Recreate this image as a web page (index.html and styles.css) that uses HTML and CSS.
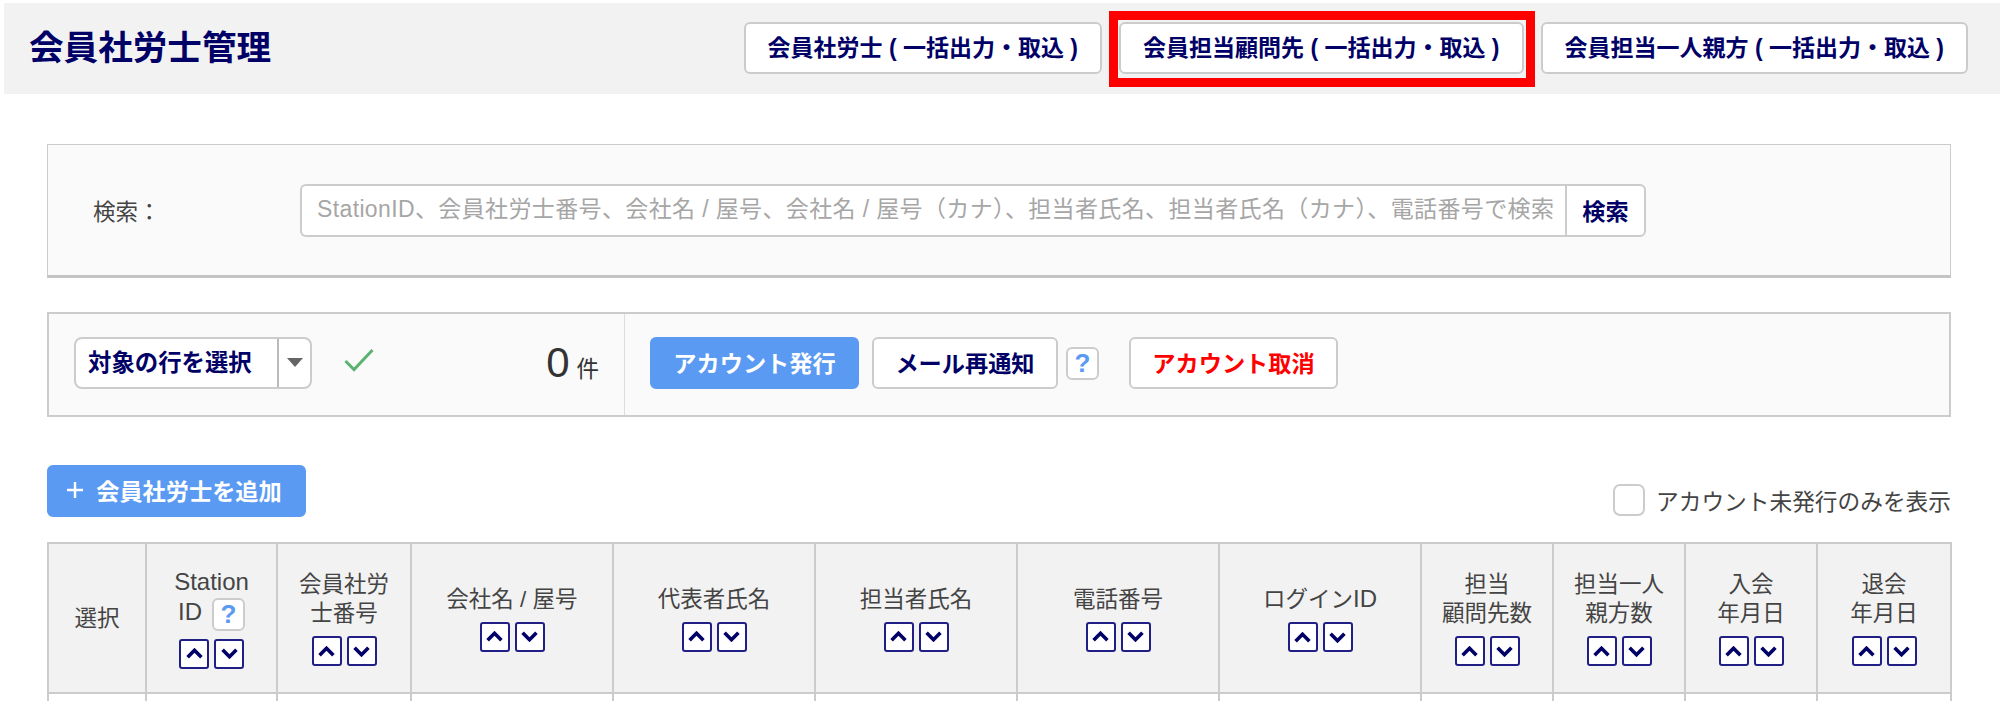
FILE: index.html
```html
<!DOCTYPE html>
<html lang="ja">
<head>
<meta charset="utf-8">
<title>会員社労士管理</title>
<link rel="stylesheet" href="styles.css">
</head>
<body>
<header class="topbar">
  <h1 class="title">会員社労士管理</h1>
  <nav class="top-actions">
    <a class="btn btn-top">会員社労士 ( 一括出力・取込 )</a>
    <a class="btn btn-top btn-marked">会員担当顧問先 ( 一括出力・取込 )</a>
    <a class="btn btn-top">会員担当一人親方 ( 一括出力・取込 )</a>
  </nav>
</header>
<main class="content">
  <section class="panel search-panel">
    <label class="search-label">検索：</label>
    <div class="search-group">
      <input class="search-input" type="text" placeholder="StationID、会員社労士番号、会社名 / 屋号、会社名 / 屋号（カナ）、担当者氏名、担当者氏名（カナ）、電話番号で検索">
      <button class="search-btn">検索</button>
    </div>
  </section>
  <section class="panel action-panel">
    <div class="select-area">
      <div class="row-select">
        <span class="row-select-label">対象の行を選択</span>
        <span class="row-select-caret"><span class="caret"></span></span>
      </div>
      <svg class="check" width="30" height="24" viewBox="0 0 30 24"><path d="M1.5 13 L10 21.5 L28.5 2" fill="none" stroke="#5cb270" stroke-width="3"/></svg>
      <div class="count"><span class="count-num">0</span><span class="count-unit">件</span></div>
    </div>
    <div class="action-buttons">
      <button class="btn btn-primary btn-issue">アカウント発行</button>
      <button class="btn btn-mail">メール再通知</button>
      <span class="help help-mail">?</span>
      <button class="btn btn-danger">アカウント取消</button>
    </div>
  </section>
  <section class="list-tools">
    <button class="btn btn-primary btn-add"><svg class="plus" width="18" height="18" viewBox="0 0 18 18"><path d="M9 1V17M1 9H17" stroke="#fff" stroke-width="2.4"/></svg>会員社労士を追加</button>
    <label class="only-unissued"><span class="checkbox"></span>アカウント未発行のみを表示</label>
  </section>
  <table class="grid">
    <colgroup>
      <col class="c-select"><col class="c-station"><col class="c-no"><col class="c-wide"><col class="c-wide"><col class="c-wide"><col class="c-wide"><col class="c-wide"><col class="c-num"><col class="c-num"><col class="c-num"><col class="c-last">
    </colgroup>
    <thead>
      <tr>
        <th>選択</th>
        <th><span class="latin">Station</span><br><span class="latin">ID</span><span class="help help-th">?</span><div class="sort"><span class="sort-btn"><svg viewBox="0 0 16 10" width="17" height="11"><path d="M1.5 8.5 L8 2 L14.5 8.5"/></svg></span><span class="sort-btn"><svg viewBox="0 0 16 10" width="17" height="11"><path d="M1.5 1.5 L8 8 L14.5 1.5"/></svg></span></div></th>
        <th>会員社労<br>士番号<div class="sort"><span class="sort-btn"><svg viewBox="0 0 16 10" width="17" height="11"><path d="M1.5 8.5 L8 2 L14.5 8.5"/></svg></span><span class="sort-btn"><svg viewBox="0 0 16 10" width="17" height="11"><path d="M1.5 1.5 L8 8 L14.5 1.5"/></svg></span></div></th>
        <th>会社名 / 屋号<div class="sort"><span class="sort-btn"><svg viewBox="0 0 16 10" width="17" height="11"><path d="M1.5 8.5 L8 2 L14.5 8.5"/></svg></span><span class="sort-btn"><svg viewBox="0 0 16 10" width="17" height="11"><path d="M1.5 1.5 L8 8 L14.5 1.5"/></svg></span></div></th>
        <th>代表者氏名<div class="sort"><span class="sort-btn"><svg viewBox="0 0 16 10" width="17" height="11"><path d="M1.5 8.5 L8 2 L14.5 8.5"/></svg></span><span class="sort-btn"><svg viewBox="0 0 16 10" width="17" height="11"><path d="M1.5 1.5 L8 8 L14.5 1.5"/></svg></span></div></th>
        <th>担当者氏名<div class="sort"><span class="sort-btn"><svg viewBox="0 0 16 10" width="17" height="11"><path d="M1.5 8.5 L8 2 L14.5 8.5"/></svg></span><span class="sort-btn"><svg viewBox="0 0 16 10" width="17" height="11"><path d="M1.5 1.5 L8 8 L14.5 1.5"/></svg></span></div></th>
        <th>電話番号<div class="sort"><span class="sort-btn"><svg viewBox="0 0 16 10" width="17" height="11"><path d="M1.5 8.5 L8 2 L14.5 8.5"/></svg></span><span class="sort-btn"><svg viewBox="0 0 16 10" width="17" height="11"><path d="M1.5 1.5 L8 8 L14.5 1.5"/></svg></span></div></th>
        <th>ログイン<span class="latin">ID</span><div class="sort"><span class="sort-btn"><svg viewBox="0 0 16 10" width="17" height="11"><path d="M1.5 8.5 L8 2 L14.5 8.5"/></svg></span><span class="sort-btn"><svg viewBox="0 0 16 10" width="17" height="11"><path d="M1.5 1.5 L8 8 L14.5 1.5"/></svg></span></div></th>
        <th>担当<br>顧問先数<div class="sort"><span class="sort-btn"><svg viewBox="0 0 16 10" width="17" height="11"><path d="M1.5 8.5 L8 2 L14.5 8.5"/></svg></span><span class="sort-btn"><svg viewBox="0 0 16 10" width="17" height="11"><path d="M1.5 1.5 L8 8 L14.5 1.5"/></svg></span></div></th>
        <th>担当一人<br>親方数<div class="sort"><span class="sort-btn"><svg viewBox="0 0 16 10" width="17" height="11"><path d="M1.5 8.5 L8 2 L14.5 8.5"/></svg></span><span class="sort-btn"><svg viewBox="0 0 16 10" width="17" height="11"><path d="M1.5 1.5 L8 8 L14.5 1.5"/></svg></span></div></th>
        <th>入会<br>年月日<div class="sort"><span class="sort-btn"><svg viewBox="0 0 16 10" width="17" height="11"><path d="M1.5 8.5 L8 2 L14.5 8.5"/></svg></span><span class="sort-btn"><svg viewBox="0 0 16 10" width="17" height="11"><path d="M1.5 1.5 L8 8 L14.5 1.5"/></svg></span></div></th>
        <th>退会<br>年月日<div class="sort"><span class="sort-btn"><svg viewBox="0 0 16 10" width="17" height="11"><path d="M1.5 8.5 L8 2 L14.5 8.5"/></svg></span><span class="sort-btn"><svg viewBox="0 0 16 10" width="17" height="11"><path d="M1.5 1.5 L8 8 L14.5 1.5"/></svg></span></div></th>
      </tr>
    </thead>
    <tbody>
      <tr class="blank-row"><td></td><td></td><td></td><td></td><td></td><td></td><td></td><td></td><td></td><td></td><td></td><td></td></tr>
    </tbody>
  </table>
</main>
</body>
</html>
```
FILE: styles.css
```css
* { box-sizing: border-box; }
html, body { margin: 0; height: 701px; overflow: hidden; background: #fff; }
body {
  padding: 3px 0 0 4px;
  font-family: "Liberation Sans", "Noto Sans CJK JP", sans-serif;
  font-size: 22.5px;
  color: #444;
}
.topbar {
  display: flex;
  align-items: center;
  justify-content: space-between;
  height: 91px;
  padding: 0 32px 2px 25px;
  background: #f2f2f2;
}
.title { margin: 0; font-size: 34.6px; line-height: 46px; font-weight: 700; color: #000066; }
.top-actions { display: flex; gap: 17px; }
.btn {
  display: inline-flex;
  align-items: center;
  justify-content: center;
  height: 52px;
  padding: 0 0 3px;
  border: 2px solid #ccc;
  border-radius: 6px;
  background: #fff;
  font: 700 23.2px "Liberation Sans", "Noto Sans CJK JP", sans-serif;
  color: #000066;
  white-space: nowrap;
}
.btn-top { padding: 0 22px 3px; font-size: 23px; }
.btn-marked { position: relative; }
.btn-marked::after {
  content: "";
  position: absolute;
  inset: -13px -13px -15px -12px;
  border: 9px solid #ff0000;
  pointer-events: none;
}
.content { width: 1904px; margin-left: 43px; }
.panel { border: 2px solid #ccc; background: #fafafa; }
.search-panel {
  display: flex;
  align-items: center;
  height: 134px;
  margin-top: 50px;
  padding: 0 0 0 45px;
  border-width: 1px 1px 3px;
  border-color: #ccc #ccc #c4c4c4;
}
.search-label { width: 208px; flex: none; }
.search-group { display: flex; width: 1346px; height: 53px; margin-top: 1px; margin-left: -1px; }
.search-input {
  flex: 1;
  min-width: 0;
  padding: 0 8px 2px 15px;
  border: 2px solid #ccc;
  border-right: 0;
  border-radius: 6px 0 0 6px;
  background: #fff;
  font: 23px "Liberation Sans", "Noto Sans CJK JP", sans-serif;
  letter-spacing: 0.37px;
}
.search-input::placeholder { color: #a6a6a6; opacity: 1; }
.search-btn {
  flex: none;
  width: 81px;
  padding: 0 0 2px;
  border: 2px solid #ccc;
  border-radius: 0 6px 6px 0;
  background: #fff;
  font: 700 23.2px "Liberation Sans", "Noto Sans CJK JP", sans-serif;
  color: #000066;
}
.action-panel {
  display: flex;
  height: 105px;
  margin-top: 34px;
}
.select-area {
  display: flex;
  align-items: center;
  width: 576px;
  padding: 0 25px 3px 25px;
  border-right: 1px solid #ddd;
}
.row-select {
  display: flex;
  width: 238px;
  height: 52px;
  margin-top: -1px;
  border: 2px solid #ccc;
  border-radius: 8px;
  background: #fff;
}
.row-select-label {
  display: flex;
  align-items: center;
  width: 203px;
  padding: 0 0 3px 12px;
  border-right: 2px solid #bbb;
  font-size: 23.4px;
  font-weight: 700;
  color: #000066;
  white-space: nowrap;
}
.row-select-caret { flex: 1; display: flex; align-items: center; justify-content: center; }
.caret {
  width: 0;
  height: 0;
  border-left: 8px solid transparent;
  border-right: 8px solid transparent;
  border-top: 9px solid #666;
}
.check { margin-left: 32px; margin-top: -6px; }
.count { margin-left: auto; display: flex; align-items: baseline; color: #333; }
.count-num { font-size: 42px; line-height: 46px; }
.count-unit { margin-left: 7px; font-size: 22.5px; }
.action-buttons { display: flex; align-items: center; padding: 0 0 3px 25px; }
.btn-primary { background: #5a9af2; border-color: #5a9af2; color: #fff; }
.btn-issue { width: 209px; }
.btn-mail { width: 186px; margin-left: 13px; }
.btn-danger { width: 209px; margin-left: 30px; color: #ff0000; }
.help {
  display: inline-flex;
  align-items: center;
  justify-content: center;
  width: 33px;
  height: 33px;
  border: 2px solid #ccc;
  border-radius: 6px;
  background: #fff;
  font-size: 26px;
  font-weight: 700;
  color: #5a9af2;
}
.help-mail { margin-left: 8px; }
.help-th { margin-left: 10px; vertical-align: middle; }
.latin { font-size: 24px; }
.list-tools {
  display: flex;
  justify-content: space-between;
  align-items: flex-end;
  height: 52px;
  margin-top: 48px;
}
.btn-add { width: 259px; padding-right: 5px; }
.plus { margin-right: 12px; }
.only-unissued { display: flex; align-items: center; height: 32px; margin-bottom: 1px; font-size: 22.7px; }
.checkbox {
  width: 32px;
  height: 32px;
  margin-right: 11px;
  border: 2px solid #ccc;
  border-radius: 7px;
  background: #fff;
}
.grid {
  width: 1903px;
  margin-top: 25px;
  table-layout: fixed;
  border-collapse: collapse;
}
.c-select { width: 98px; }
.c-station { width: 131px; }
.c-no { width: 134px; }
.c-wide { width: 202px; }
.c-num { width: 132px; }
.c-last { width: 134px; }
.grid th, .grid td { border: 2px solid #ccc; }
.grid th {
  height: 150px;
  padding: 0 4px;
  background: #f2f2f2;
  font-weight: 400;
  line-height: 29px;
  text-align: center;
  vertical-align: middle;
}
.blank-row td { height: 60px; background: #fff; }
.sort { display: flex; justify-content: center; gap: 5px; margin-top: 8px; }
.sort-btn {
  display: flex;
  align-items: center;
  justify-content: center;
  width: 30px;
  height: 30px;
  border: 2px solid #1f1f85;
  border-radius: 3px;
  background: #fff;
}
.sort-btn svg { fill: none; stroke: #000066; stroke-width: 3.4; }
```
